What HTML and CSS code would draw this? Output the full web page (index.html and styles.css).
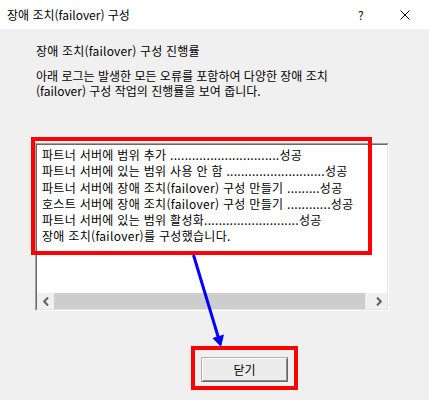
FILE: index.html
```html
<!DOCTYPE html>
<html lang="ko">
    <head>
        <meta charset="UTF-8" />
        <meta name="viewport" content="width=device-width, initial-scale=1.0" />
        <title>장애 조치(failover) 구성</title>
        <link rel="stylesheet" href="styles.css">
    </head>
    <body>
        <div class="dialog">
            <div class="titlebar">
                <span class="title">장애 조치(failover) 구성</span>
                <span class="help">?</span>
                <svg class="close" width="10" height="10" viewBox="0 0 10 10">
                    <path d="M0.5 0.5 L9.5 9.5 M9.5 0.5 L0.5 9.5" stroke="#000" stroke-width="1" fill="none" />
                </svg>
            </div>
            <div class="content">
                <h3>장애 조치(failover) 구성 진행률</h3>
                <p class="desc">아래 로그는 발생한 모든 오류를 포함하여 다양한 장애 조치<br>(failover) 구성 작업의 진행률을 보여 줍니다.</p>

                <div class="log">
                    <div class="log-inner">
                        <ul class="lines">
                            <li>파트너 서버에 범위 추가 ..............................성공</li>
                            <li>파트너 서버에 있는 범위 사용 안 함 ...........................성공</li>
                            <li>파트너 서버에 장애 조치(failover) 구성 만들기 .........성공</li>
                            <li>호스트 서버에 장애 조치(failover) 구성 만들기 ............성공</li>
                            <li>파트너 서버에 있는 범위 활성화..........................성공</li>
                            <li>장애 조치(failover)를 구성했습니다.</li>
                        </ul>
                        <div class="hscroll">
                            <div class="arrow">
                                <svg width="6" height="9" viewBox="0 0 6 9"><path d="M5 0.5 L1.2 4.5 L5 8.5" stroke="#606060" stroke-width="2" fill="none" /></svg>
                            </div>
                            <div class="thumb"></div>
                            <div class="track"></div>
                            <div class="arrow">
                                <svg width="6" height="9" viewBox="0 0 6 9"><path d="M1 0.5 L4.8 4.5 L1 8.5" stroke="#606060" stroke-width="2" fill="none" /></svg>
                            </div>
                        </div>
                    </div>
                </div>

                <div class="actions">
                    <button class="close-btn">닫기</button>
                </div>
            </div>

            <!-- 표시용 주석 -->
            <div class="mark mark-log"></div>
            <div class="mark mark-btn"></div>
            <svg class="pointer" width="429" height="400" viewBox="0 0 429 400">
                <line x1="193.5" y1="255" x2="218.5" y2="338" stroke="#0000ff" stroke-width="3" />
                <polygon points="221,347 224,334.5 212.5,338" fill="#0000ff" />
            </svg>
        </div>
    </body>
</html>
```

FILE: styles.css
```css
body {
    margin: 0;
    font-family: "Noto Sans CJK KR", "Liberation Sans", sans-serif;
    font-size: 12px;
    color: #000;
}
ul {
    margin: 0;
    padding: 0;
    list-style: none;
}
h3,
p {
    margin: 0;
    font-weight: normal;
    font-size: 12px;
}
.dialog {
    position: relative;
    width: 429px;
    height: 400px;
    background: #f0f0f0;
    overflow: hidden;
}
.titlebar {
    display: flex;
    align-items: center;
    height: 29px;
    padding-left: 7px;
    background: #fff;
    line-height: 15px;
}
.titlebar .title {
    flex: 1;
}
.titlebar .help {
    width: 8px;
    margin-right: 34px;
}
.titlebar .close {
    margin-right: 19px;
}
.content {
    padding: 14px 0 0 35px;
}
.content h3,
.content .desc {
    margin-left: 1px;
    line-height: 15px;
}
.content h3 {
    letter-spacing: 0.2px;
}
.content .desc {
    margin-top: 10px;
}
.log {
    width: 352px;
    height: 166px;
    margin-top: 45px;
    border: 1px solid;
    border-color: #a0a0a0 #ffffff #ffffff #a0a0a0;
}
.log-inner {
    display: flex;
    flex-direction: column;
    height: 164px;
    border: 1px solid;
    border-color: #696969 #e3e3e3 #e3e3e3 #696969;
    background: #fff;
}
.lines {
    flex: 1;
    padding: 2px 0 0 5px;
    line-height: 16.3px;
    letter-spacing: 0.3px;
    white-space: nowrap;
}
.hscroll {
    display: flex;
    height: 16px;
    background: #f0f0f0;
}
.hscroll .arrow {
    display: flex;
    width: 17px;
    justify-content: center;
    align-items: center;
}
.hscroll .thumb {
    width: 311px;
    background: #cdcdcd;
}
.hscroll .track {
    flex: 1;
}
.actions {
    padding: 46px 0 0 166px;
}
.close-btn {
    width: 87px;
    height: 25px;
    padding: 0;
    font-family: inherit;
    font-size: 12px;
    background: #ececec;
    border: 1px solid;
    border-color: #b0b0b0 #696969 #696969 #b0b0b0;
    box-shadow: inset 1px 1px 0 #fff, inset -1px -1px 0 #8a8a8a;
}

/* 빨간 표시, 파란 화살표 */
.mark {
    position: absolute;
    border: 4px solid #ff0000;
    box-sizing: border-box;
}
.mark-log {
    left: 31px;
    top: 137px;
    width: 341px;
    height: 118px;
}
.mark-btn {
    left: 191px;
    top: 346px;
    width: 107px;
    height: 44px;
}
.pointer {
    position: absolute;
    top: 0;
    left: 0;
}
```
